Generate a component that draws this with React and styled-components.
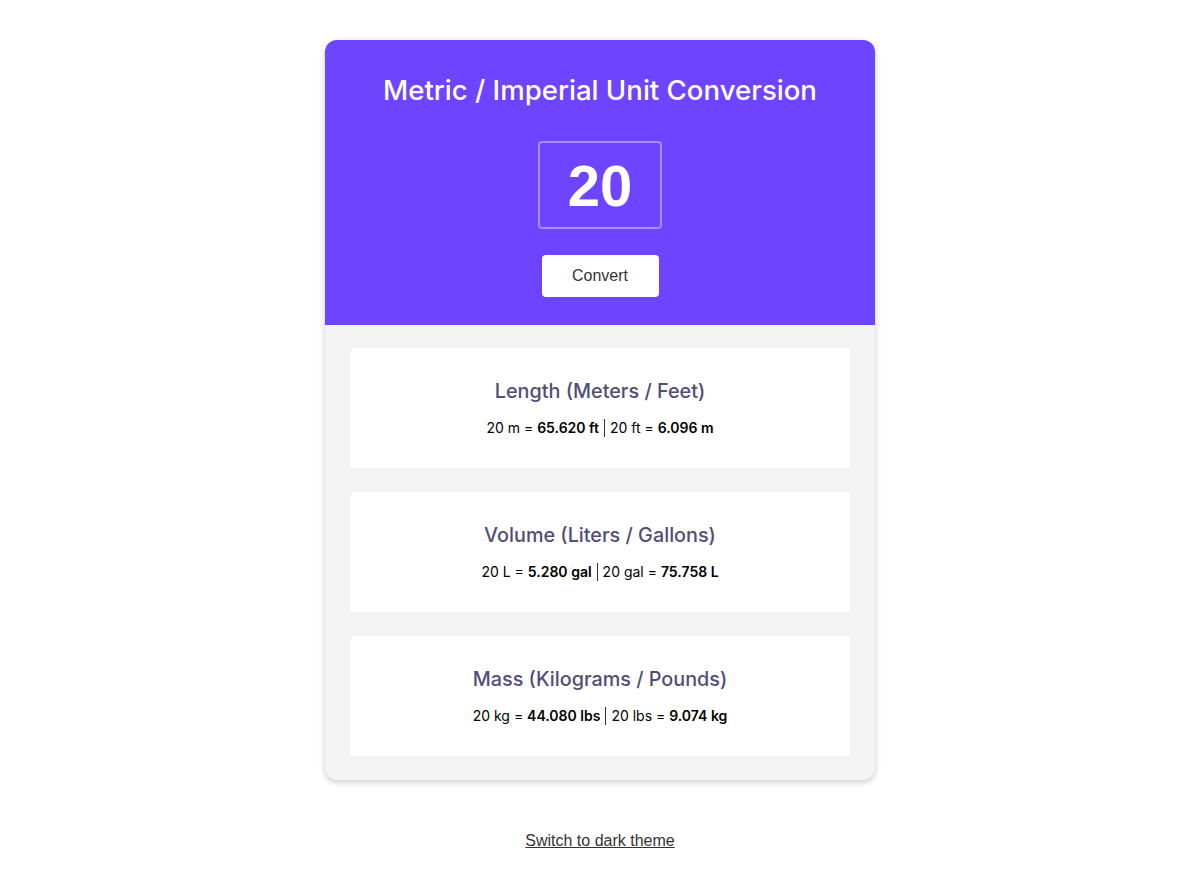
import React, { useState } from 'react'
import styled, { createGlobalStyle } from 'styled-components'

const GlobalStyle = createGlobalStyle`
  body {
    margin: 0;
    background: #ffffff;
    font-family: Inter, "Liberation Sans", sans-serif;
  }
`

const conversions = [
  { title: 'Length (Meters / Feet)', a: 'm', b: 'ft', factor: 3.281 },
  { title: 'Volume (Liters / Gallons)', a: 'L', b: 'gal', factor: 0.264 },
  { title: 'Mass (Kilograms / Pounds)', a: 'kg', b: 'lbs', factor: 2.204 },
]

const App = () => {
  const [value, setValue] = useState('20')
  const [num, setNum] = useState(20)

  return (
    <Page>
      <GlobalStyle />
      <Card>
        <Header>
          <h1>Metric / Imperial Unit Conversion</h1>
          <NumberInput value={value} onChange={(e) => setValue(e.target.value)} />
          <ConvertButton onClick={() => setNum(Number(value) || 0)}>Convert</ConvertButton>
        </Header>
        <Results>
          {conversions.map((c) => (
            <ResultCard key={c.title}>
              <h2>{c.title}</h2>
              <p>
                {num} {c.a} = <strong>{(num * c.factor).toFixed(3)} {c.b}</strong>
                <Divider />
                {num} {c.b} = <strong>{(num / c.factor).toFixed(3)} {c.a}</strong>
              </p>
            </ResultCard>
          ))}
        </Results>
      </Card>
      <ThemeLink href="#">Switch to dark theme</ThemeLink>
    </Page>
  )
}

const Page = styled.div`
  display: flex;
  flex-direction: column;
  align-items: center;
  padding-top: 40px;
`

const Card = styled.main`
  width: 550px;
  border-radius: 12px;
  overflow: hidden;
  background-color: #f3f3f3;
  box-shadow: 0 2px 6px rgba(0, 0, 0, 0.22);
`

const Header = styled.header`
  background-color: #6e44ff;
  display: flex;
  flex-direction: column;
  align-items: center;
  padding: 31px 0 28px;

  h1 {
    margin: 0 0 32px;
    color: #ffffff;
    font-family: Inter, sans-serif;
    font-size: 27.6px;
    font-weight: 500;
    line-height: 38px;
  }
`

const NumberInput = styled.input`
  box-sizing: border-box;
  width: 124px;
  height: 88px;
  background: transparent;
  border: 2px solid rgba(255, 255, 255, 0.4);
  border-radius: 4px;
  color: #ffffff;
  text-align: center;
  font-family: "Liberation Sans", Arial, sans-serif;
  font-size: 58px;
  font-weight: 700;
  outline: none;
  margin-bottom: 26px;
`

const ConvertButton = styled.button`
  width: 117px;
  height: 42px;
  border: none;
  border-radius: 4px;
  background: #ffffff;
  color: #333333;
  font-family: "Liberation Sans", Arial, sans-serif;
  font-size: 16px;
  cursor: pointer;
`

const Results = styled.section`
  display: flex;
  flex-direction: column;
  gap: 24px;
  padding: 23px 25px 24px;
`

const ResultCard = styled.article`
  height: 120px;
  box-sizing: border-box;
  background: #ffffff;
  border-radius: 5px 0 0 0;
  text-align: center;
  padding-top: 30px;

  h2 {
    margin: 0 0 15px;
    color: #534d76;
    font-size: 19.8px;
    font-weight: 500;
    line-height: 26px;
  }

  p {
    margin: 0;
    color: #000000;
    font-size: 14px;
    line-height: 18px;
  }

  strong {
    font-weight: 600;
  }
`

const Divider = styled.span`
  display: inline-block;
  width: 1px;
  height: 18px;
  background: #333333;
  margin: 0 5px;
  vertical-align: -4px;
`

const ThemeLink = styled.a`
  margin-top: 52px;
  color: #333333;
  font-family: "Liberation Sans", Arial, sans-serif;
  font-size: 16px;
  text-decoration: underline;
`

export default App
